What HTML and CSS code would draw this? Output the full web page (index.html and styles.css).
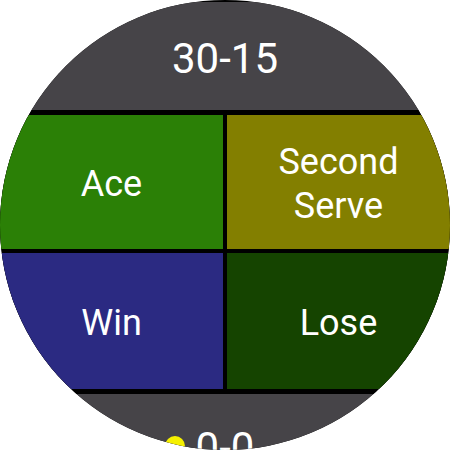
FILE: index.html
```html
<!DOCTYPE html>
<html>
<head>
<meta charset="utf-8">
<link rel="stylesheet" href="styles.css">
</head>
<body>
<div class="screen">
  <div class="header"><span class="score">30-15</span></div>
  <div class="grid">
    <div class="cell ace">Ace</div>
    <div class="cell second">Second<br>Serve</div>
    <div class="cell win">Win</div>
    <div class="cell lose">Lose</div>
  </div>
  <div class="footer">
    <span class="dot serving"></span>
    <span class="games">0-0</span>
    <span class="dot"></span>
  </div>
</div>
</body>
</html>
```

FILE: styles.css
```css
html, body {
  margin: 0;
  padding: 0;
  background: #ffffff;
}

.screen {
  width: 450px;
  height: 450px;
  border-radius: 50%;
  overflow: hidden;
  background: #000000;
  display: flex;
  flex-direction: column;
  font-family: Roboto, "Liberation Sans", sans-serif;
  color: #ffffff;
}

.header {
  flex: 0 0 auto;
  margin-top: 2px;
  height: 108px;
  box-sizing: border-box;
  padding-top: 5px;
  background: #464448;
  display: flex;
  align-items: center;
  justify-content: center;
}

.score {
  font-size: 42px;
  line-height: normal;
}

.grid {
  flex: 0 0 auto;
  background: #000000;
  padding: 5px 0;
  display: grid;
  grid-template-columns: 223px 223px;
  grid-template-rows: 134px 136px;
  column-gap: 4px;
  row-gap: 4px;
}

.cell {
  box-sizing: border-box;
  padding-top: 5px;
  display: flex;
  align-items: center;
  justify-content: center;
  text-align: center;
  font-size: 36px;
  line-height: 1.2;
}

.ace { background: #2b8006; }
.second { background: #837f00; }
.win { background: #2b2a82; }
.lose { background: #154400; }

.footer {
  flex: 1 0 auto;
  background: #464448;
  display: flex;
  justify-content: center;
  align-items: flex-start;
  padding-top: 29px;
  gap: 11px;
}

.games {
  font-size: 42px;
  line-height: normal;
}

.dot {
  width: 20px;
  height: 20px;
  border-radius: 50%;
  margin-top: 13px;
  background: transparent;
}

.dot.serving {
  background: #f5f000;
}
```
